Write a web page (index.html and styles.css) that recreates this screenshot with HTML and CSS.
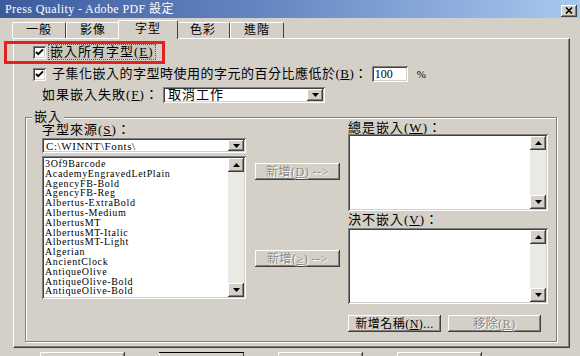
FILE: index.html
```html
<!DOCTYPE html>
<html lang="zh-Hant-TW">
<head>
  <meta charset="utf-8" />
  <title>Press Quality - Adobe PDF 設定</title>
  <link rel="stylesheet" href="styles.css">
</head>
<body>
  <div class="titlebar">
    <span class="title">Press Quality - Adobe PDF 設定</span>
    <span class="close raised">
      <svg width="8" height="7" viewBox="0 0 8 7"><path d="M1 0.5l6 6M7 0.5l-6 6" stroke="#000" stroke-width="1.6" fill="none"/></svg>
    </span>
  </div>

  <!--分頁標籤-->
  <div class="tabs">
    <div class="tab">一般</div>
    <div class="tab">影像</div>
    <div class="tab active">字型</div>
    <div class="tab">色彩</div>
    <div class="tab">進階</div>
  </div>

  <div class="panel">
    <div class="row row-check">
      <span class="checkbox"><svg width="9" height="9" viewBox="0 0 9 9"><path d="M1 4l2.2 2.2L8 1.4" stroke="#000" stroke-width="2" fill="none"/></svg></span>
      <span class="focus">嵌入所有字型(<u>E</u>)</span>
    </div>
    <div class="row row-check row-subset">
      <span class="checkbox"><svg width="9" height="9" viewBox="0 0 9 9"><path d="M1 4l2.2 2.2L8 1.4" stroke="#000" stroke-width="2" fill="none"/></svg></span>
      <span class="subset-text">子集化嵌入的字型時使用的字元的百分比應低於(<u>B</u>)：</span>
      <span class="field percent">100</span>
      <span class="percent-sign">%</span>
    </div>
    <div class="row row-fail">
      <span class="fail-label">如果嵌入失敗(<u>F</u>)：</span>
      <span class="field combo combo-fail">
        <span class="combo-text">取消工作</span>
        <span class="arrow-btn raised"><svg width="7" height="4" viewBox="0 0 7 4"><path d="M0 0h7L3.5 4z"/></svg></span>
      </span>
    </div>

    <!--嵌入群組-->
    <div class="group">
      <span class="legend">嵌入</span>
      <div class="col col-source">
        <div class="label label-source">字型來源(<u>S</u>)：</div>
        <div class="field combo combo-source">
          <span class="combo-text">C:\WINNT\Fonts\</span>
          <span class="arrow-btn raised"><svg width="7" height="4" viewBox="0 0 7 4"><path d="M0 0h7L3.5 4z"/></svg></span>
        </div>
        <div class="field listbox list-fonts">
          <div class="items">
            <div>3Of9Barcode</div>
            <div>AcademyEngravedLetPlain</div>
            <div>AgencyFB-Bold</div>
            <div>AgencyFB-Reg</div>
            <div>Albertus-ExtraBold</div>
            <div>Albertus-Medium</div>
            <div>AlbertusMT</div>
            <div>AlbertusMT-Italic</div>
            <div>AlbertusMT-Light</div>
            <div>Algerian</div>
            <div>AncientClock</div>
            <div>AntiqueOlive</div>
            <div>AntiqueOlive-Bold</div>
            <div>AntiqueOlive-Bold</div>
          </div>
          <div class="scrollbar">
            <span class="scroll-btn raised"><svg width="7" height="4" viewBox="0 0 7 4"><path d="M0 4h7L3.5 0z"/></svg></span>
            <span class="scroll-btn raised"><svg width="7" height="4" viewBox="0 0 7 4"><path d="M0 0h7L3.5 4z"/></svg></span>
          </div>
        </div>
      </div>

      <div class="col col-add">
        <span class="button raised disabled add-always">新增(<u>D</u>) --&gt;</span>
        <span class="button raised disabled add-never">新增(<u>≥</u>) --&gt;</span>
      </div>

      <div class="col col-lists">
        <div class="label">總是嵌入(<u>W</u>)：</div>
        <div class="field listbox list-small">
          <div class="items"></div>
          <div class="scrollbar">
            <span class="scroll-btn raised"><svg width="7" height="4" viewBox="0 0 7 4"><path d="M0 4h7L3.5 0z"/></svg></span>
            <span class="scroll-btn raised"><svg width="7" height="4" viewBox="0 0 7 4"><path d="M0 0h7L3.5 4z"/></svg></span>
          </div>
        </div>
        <div class="label label-never">決不嵌入(<u>V</u>)：</div>
        <div class="field listbox list-small list-never">
          <div class="items"></div>
          <div class="scrollbar">
            <span class="scroll-btn raised"><svg width="7" height="4" viewBox="0 0 7 4"><path d="M0 4h7L3.5 0z"/></svg></span>
            <span class="scroll-btn raised"><svg width="7" height="4" viewBox="0 0 7 4"><path d="M0 0h7L3.5 4z"/></svg></span>
          </div>
        </div>
        <div class="name-buttons">
          <span class="button raised">新增名稱(<u>N</u>)...</span>
          <span class="button raised disabled">移除(<u>R</u>)</span>
        </div>
      </div>
    </div>
  </div>

  <!--對話框底部按鈕(只露出上緣)-->
  <div class="footer">
    <span class="button raised"></span>
    <span class="button raised default"></span>
    <span class="button raised"></span>
    <span class="button raised"></span>
  </div>

  <div class="highlight"></div>
</body>
</html>
```

FILE: styles.css
```css
body{
  position: relative;
  width: 580px;
  height: 356px;
  margin: 0;
  overflow: hidden;
  background-color: #d4d0c8;
  color: #000;
  font-family: "Liberation Serif", "Noto Sans CJK TC", serif;
  font-size: 13px;
  line-height: 14px;
}
u{
  text-decoration: underline;
  text-underline-offset: 1px;
}
/* 立體效果 */
.raised{
  background-color: #d4d0c8;
  box-shadow: inset -1px -1px #404040, inset 1px 1px #fff, inset -2px -2px #808080;
}
.field{
  box-sizing: border-box;
  padding: 2px;
  background-color: #fff;
  box-shadow: inset 1px 1px #808080, inset -1px -1px #fff, inset 2px 2px #404040, inset -2px -2px #d4d0c8;
}

.titlebar{
  display: flex;
  align-items: center;
  justify-content: space-between;
  height: 18px;
  padding: 0 3px 0 5px;
  background: linear-gradient(90deg, #3b5b9d 0%, #6585c2 45%, #a8c9ee 100%);
  color: #fff;
}
.title{
  font-size: 12px;
  letter-spacing: 0.4px;
}
.close{
  display: flex;
  align-items: center;
  justify-content: center;
  width: 16px;
  height: 12px;
  margin-top: 3px;
}

.tabs{
  display: flex;
  align-items: flex-end;
  height: 20px;
  padding-left: 12px;
}
.tab{
  box-sizing: border-box;
  width: 54px;
  height: 16px;
  border-top: 1px solid #fff;
  border-left: 1px solid #fff;
  border-right: 1px solid #404040;
  border-radius: 2px 2px 0 0;
  font-size: 12px;
  letter-spacing: 1px;
  line-height: 15px;
  text-align: center;
}
.tab.active{
  position: relative;
  z-index: 1;
  width: 60px;
  height: 19px;
  margin: 0 -2px -1px -2px;
  background-color: #d4d0c8;
  line-height: 16px;
}

.panel{
  box-sizing: border-box;
  width: 557px;
  height: 310px;
  margin-left: 13px;
  padding-top: 3px;
  border: 1px solid #fff;
  border-right-color: #404040;
  border-bottom-color: #404040;
  box-shadow: inset -1px -1px #808080;
}
.row{
  display: flex;
  align-items: center;
  height: 20px;
}
.row-check{
  padding-left: 19px;
}
.row-subset{
  margin-top: 2px;
}
.checkbox{
  box-sizing: border-box;
  display: flex;
  align-items: center;
  justify-content: center;
  width: 13px;
  height: 13px;
  background-color: #fff;
  box-shadow: inset 1px 1px #808080, inset -1px -1px #fff, inset 2px 2px #404040, inset -2px -2px #d4d0c8;
}
.focus{
  margin-left: 3px;
  padding: 0 1px;
  outline: 1px dotted #555;
  background-color: #cbc7bf;
  letter-spacing: 1px;
}
.subset-text{
  margin-left: 6px;
  letter-spacing: 0.5px;
}
.percent{
  width: 36px;
  height: 16px;
  margin-left: 4px;
  padding: 1px 3px;
  font-size: 12px;
  line-height: 14px;
}
.percent-sign{
  margin-left: 9px;
  font-size: 11px;
}
.row-fail{
  height: 18px;
  margin-top: 2px;
  padding-left: 28px;
}
.fail-label{
  width: 121px;
  letter-spacing: 1px;
}
.combo{
  display: flex;
  align-items: center;
  justify-content: space-between;
  height: 16px;
}
.combo-fail{
  width: 162px;
}
.combo-text{
  padding-left: 3px;
  letter-spacing: 1px;
}
.arrow-btn{
  display: flex;
  align-items: center;
  justify-content: center;
  width: 16px;
  height: 100%;
}

.group{
  position: relative;
  box-sizing: border-box;
  display: flex;
  width: 532px;
  height: 225px;
  margin: 13px 0 0 11px;
  padding-left: 16px;
  border: 1px solid #808080;
  box-shadow: inset 1px 1px #fff, 1px 1px #fff;
}
.legend{
  position: absolute;
  top: -8px;
  left: 6px;
  padding: 0 2px;
  background-color: #d4d0c8;
  letter-spacing: 1px;
}
.col{
  display: flex;
  flex-direction: column;
}
.label{
  height: 13px;
  margin-top: 3px;
  letter-spacing: 1px;
}
.col-source{
  width: 204px;
}
.label-source{
  height: 14px;
  margin-top: 5px;
}
.combo-source{
  height: 15px;
  margin-top: 1px;
}
.combo-source .combo-text{
  padding-left: 2px;
  font-size: 11px;
  letter-spacing: 0.6px;
}
.listbox{
  display: flex;
}
.list-fonts{
  height: 143px;
  margin-top: 3px;
}
.items{
  flex: 1;
  overflow: hidden;
  padding: 1px 0 0 1px;
  font-size: 10px;
  letter-spacing: 0.65px;
  line-height: 9.8px;
}
.scrollbar{
  display: flex;
  flex-direction: column;
  justify-content: space-between;
  width: 16px;
  background-color: #ebe9e4;
}
.scroll-btn{
  display: flex;
  align-items: center;
  justify-content: center;
  height: 14px;
}

.col-add{
  width: 85px;
  margin-left: 9px;
}
.button{
  box-sizing: border-box;
  display: flex;
  align-items: center;
  justify-content: center;
  height: 17px;
  font-size: 12px;
  letter-spacing: 0.5px;
}
.disabled{
  color: #8a8883;
  text-shadow: 1px 1px #fff;
}
.add-always{
  margin-top: 45px;
}
.add-never{
  margin-top: 70px;
}

.col-lists{
  width: 200px;
  margin-left: 8px;
}
.list-small{
  height: 77px;
}
.label-never{
  margin-top: 2px;
}
.list-never{
  height: 76px;
  margin-top: 2px;
}
.name-buttons{
  display: flex;
  gap: 7px;
  margin-top: 11px;
}
.name-buttons .button{
  width: 93px;
}

.footer{
  display: flex;
  gap: 34px;
  height: 4px;
  margin-top: 4px;
  padding-left: 40px;
  overflow: hidden;
}
.footer .button{
  width: 85px;
  height: 23px;
  flex-shrink: 0;
}
.footer .default{
  box-shadow: inset 0 1px #000, inset -1px -1px #404040, inset 1px 1px #fff;
}

/* 紅色標示框 */
.highlight{
  position: absolute;
  top: 41px;
  left: 4px;
  box-sizing: border-box;
  width: 161px;
  height: 23px;
  border: 3px solid #e3211f;
}
```
